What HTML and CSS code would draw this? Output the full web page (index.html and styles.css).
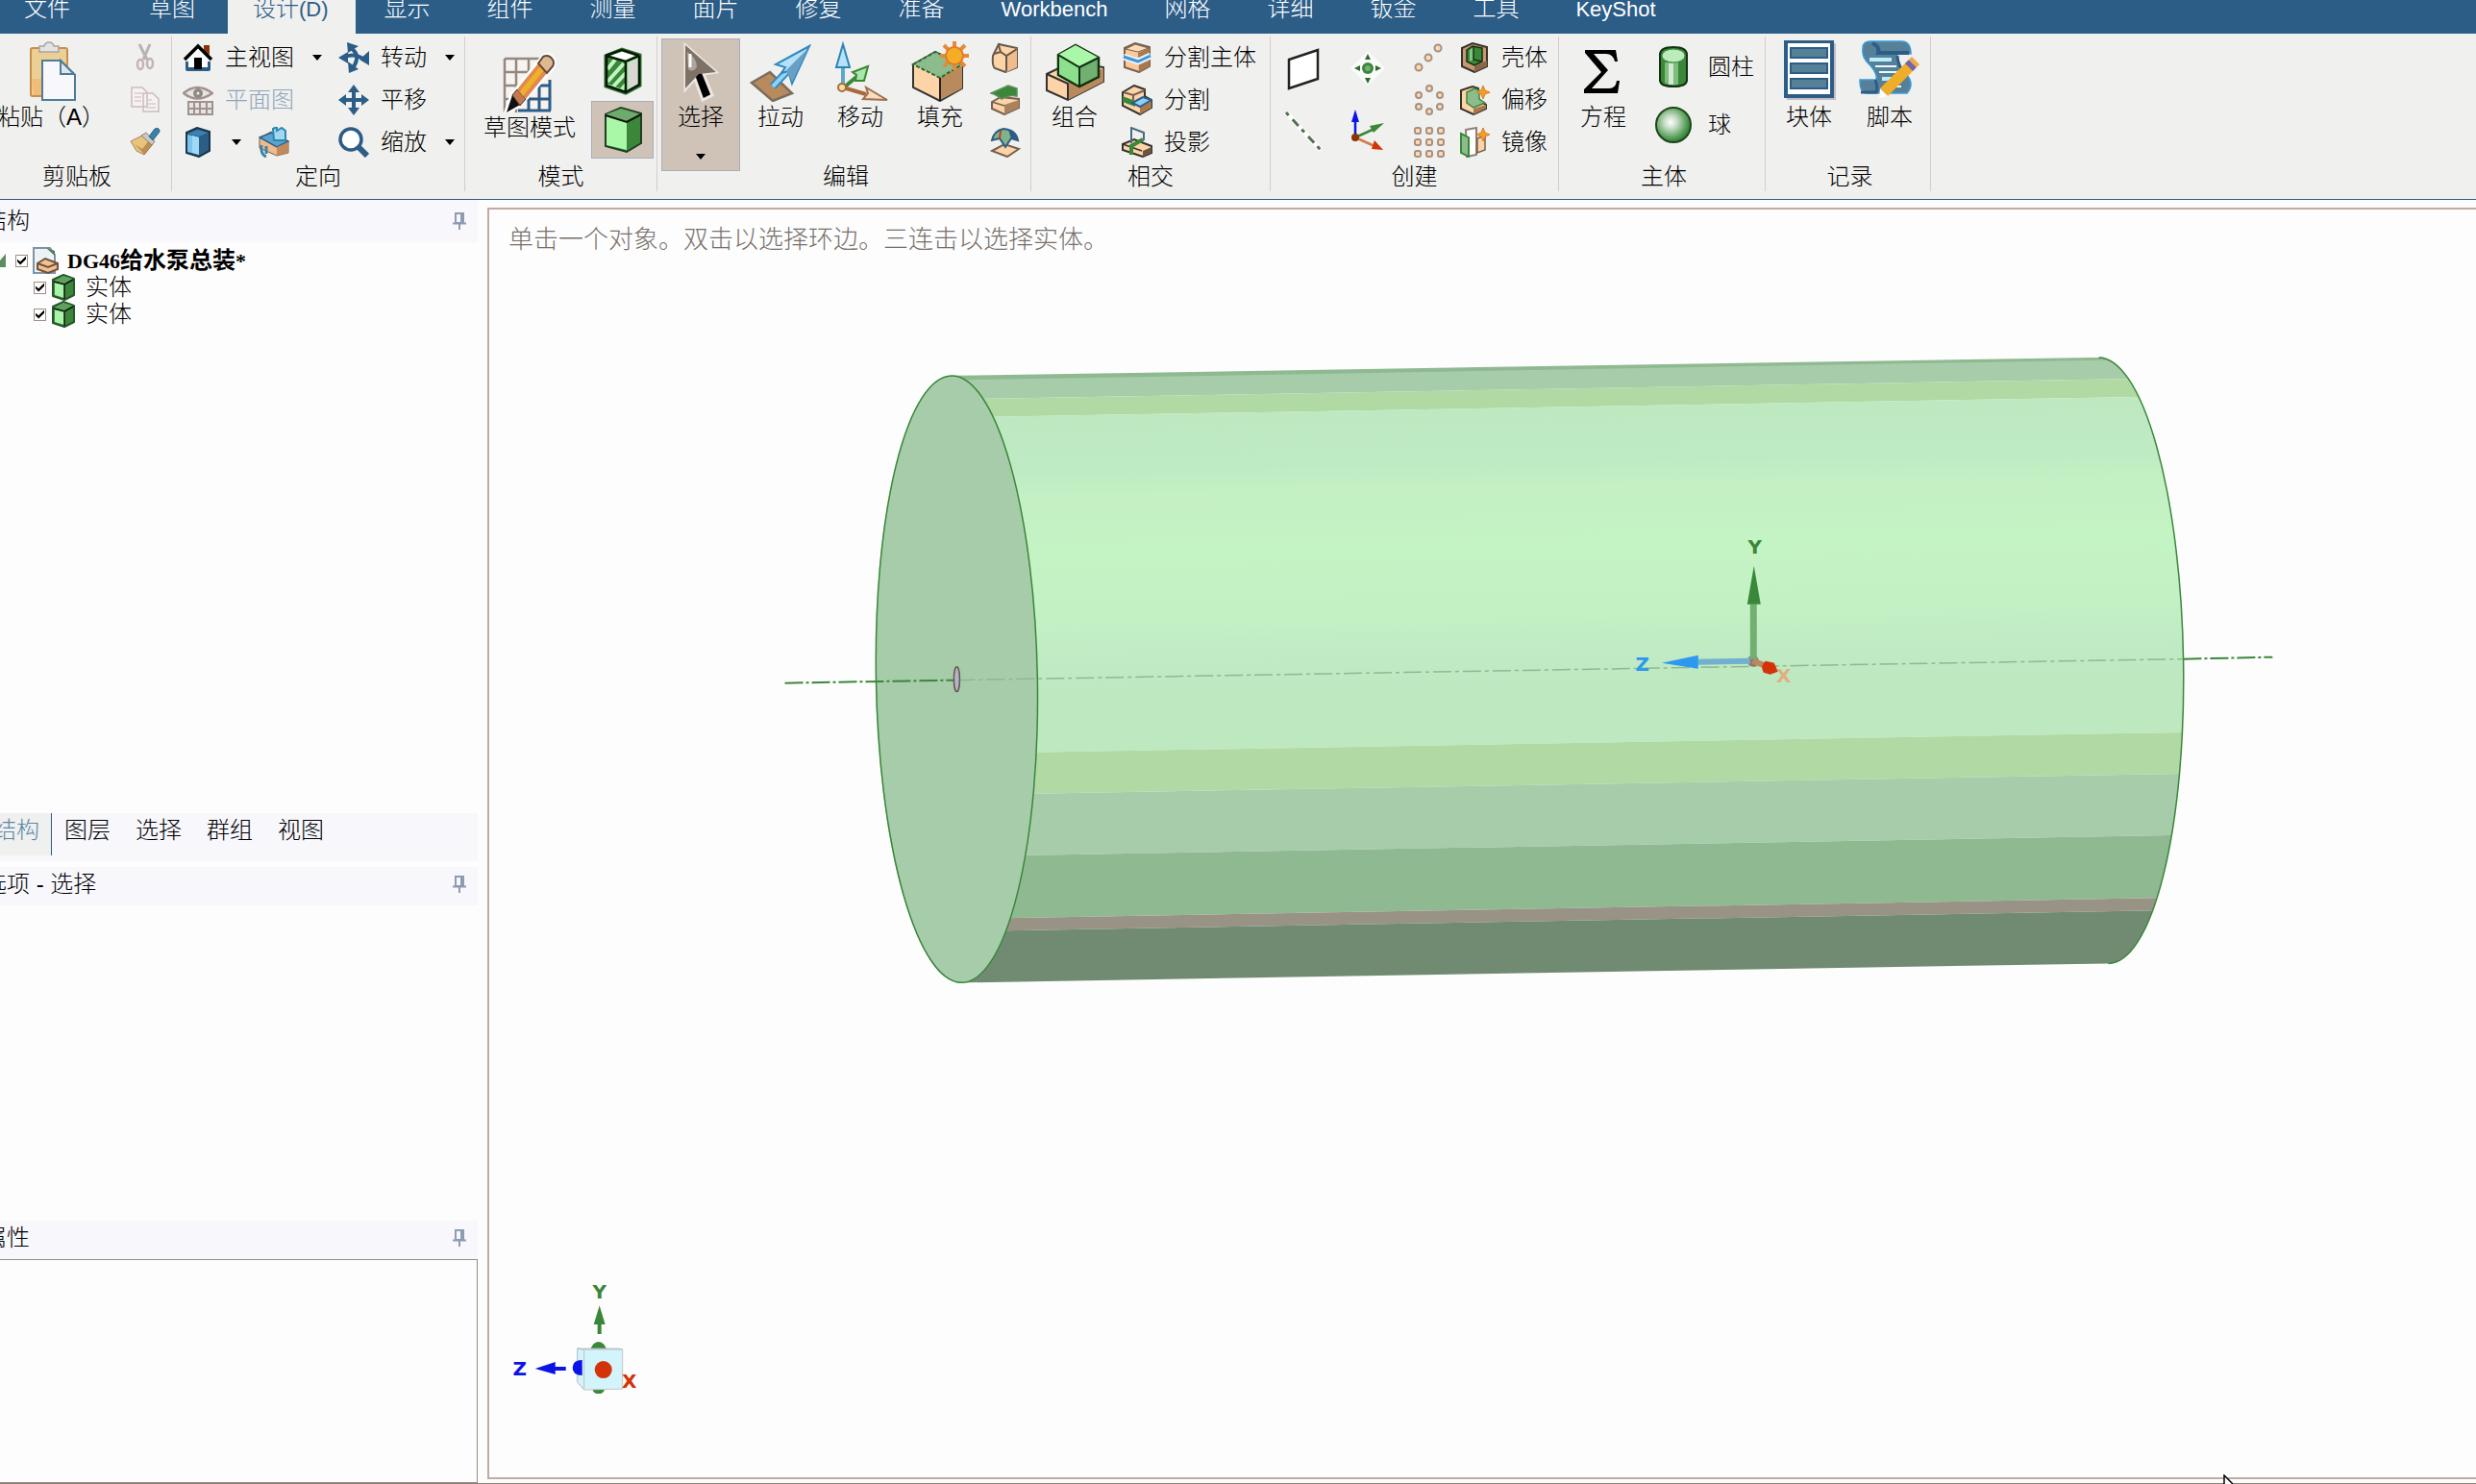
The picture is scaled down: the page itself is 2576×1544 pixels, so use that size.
FILE: index.html
```html
<!doctype html>
<html lang="zh-CN">
<head>
    <meta charset="UTF-8">
    <title>DG46给水泵总装</title>
    <link rel="stylesheet" href="styles.css">
</head>
<body>
<!-- shared icons -->
<svg class="defs" width="0" height="0">
    <symbol id="cube" viewBox="0 0 24 28">
        <path d="M1 6L12 1L23 5V22L13 27L1 23Z" fill="#3a873a" stroke="#2a552a" stroke-width="2" stroke-linejoin="round"/>
        <path d="M2 7L12 2L22 5L13 10Z" fill="#5da35d"/>
        <path d="M3 9L13 11V25L3 22Z" fill="#a8f4a8"/>
        <path d="M2 8L13 11L22 6M13 11V26" fill="none" stroke="#111" stroke-width="1.5"/>
    </symbol>
    <symbol id="pin" viewBox="0 0 14 18">
        <path d="M3 1H11V11H3ZM0 11.500H14M7 12V18M9 1V11" fill="none" stroke="#8f9bb0" stroke-width="2"/>
    </symbol>
</svg>

<nav id="tabs">
    <button class="file">文件</button>
    <button>草图</button>
    <button class="selected">设计<span>(D)</span></button>
    <button>显示</button>
    <button>组件</button>
    <button>测量</button>
    <button>面片</button>
    <button>修复</button>
    <button>准备</button>
    <button><span>Workbench</span></button>
    <button>网格</button>
    <button>详细</button>
    <button>钣金</button>
    <button>工具</button>
    <button><span>KeyShot</span></button>
</nav>

<div id="ribbon">
    <section class="group clipboard">
        <div class="tools">
            <button class="big">
                <svg width="64" height="64" viewBox="0 0 64 64">
                    <rect x="11" y="8" width="38" height="50" rx="2" fill="#eccf94" stroke="#c98e4c" stroke-width="2"/>
                    <path d="M12 40H30V57H14Z" fill="#f3b569" opacity=".7"/>
                    <path d="M20 12V6H25Q26 2 30 2T35 6H40V12Z" fill="#e4e2e2" stroke="#aaa2a2" stroke-width="1.500"/>
                    <path d="M23 21H42L57 36V62H23Z" fill="#f8f8fc" stroke="#4d7d98" stroke-width="2"/>
                    <path d="M42 21V35H56Z" fill="#dfe6ea" stroke="#4d7d98" stroke-width="2"/>
                </svg>
                <span>粘贴（A）</span>
            </button>
            <div class="col icons">
                <button aria-label="剪切" disabled><svg width="32" height="32" viewBox="0 0 32 32"><path d="M10 2L18 18M21 2L14 18" stroke="#b9b3b6" stroke-width="3"/><ellipse cx="11" cy="23" rx="3" ry="5" fill="none" stroke="#c5b3b3" stroke-width="2.500"/><ellipse cx="21" cy="22" rx="3" ry="5" fill="none" stroke="#c5b3b3" stroke-width="2.500"/></svg></button>
                <button aria-label="复制" disabled><svg width="32" height="32" viewBox="0 0 32 32"><path d="M2 3H13L18 8V23H2ZM14 9H24L30 15V28H14Z" fill="#f6f2f2" stroke="#cdbcbc" stroke-width="1.500"/><path d="M5 9H13M5 13H12M5 17H12M17 16H23M17 20H27M17 24H27" stroke="#d6cccc" stroke-width="1.500"/></svg></button>
                <button aria-label="格式刷"><svg width="32" height="32" viewBox="0 0 32 32"><path d="M1 15L15 8L24 18L15 29L7 25Z" fill="#e9c47e" stroke="#a98454"/><path d="M5 18L12 25L15 29L24 18L20 14L13 23Z" fill="#9b6a3a" opacity=".6"/><path d="M12 9L17 6L26 15L23 19Z" fill="#cfc6c0" stroke="#8d8078"/><path d="M20 10L26 2Q31 0 31 5L24 14Z" fill="#3b82a8" stroke="#2c5d87"/></svg></button>
            </div>
        </div>
        <h2>剪贴板</h2>
    </section>

    <section class="group orient">
        <div class="tools">
            <div class="col">
                <button class="row"><svg width="32" height="32" viewBox="0 0 32 32"><path d="M22 3H28V13L22 9Z" fill="#8a3305"/><path d="M3 20H29V28Q29 30 27 30H5Q3 30 3 28Z" fill="#2c5d87"/><path d="M6 17L16 6L26 17V26H6Z" fill="#fff"/><path d="M2 18L16 4L30 18" fill="none" stroke="#000" stroke-width="3.500"/><rect x="12" y="16" width="8" height="12" fill="#000"/></svg><span>主视图</span><i class="caret"></i></button>
                <button class="row" disabled><svg width="32" height="32" viewBox="0 0 32 32"><path d="M1 9Q15 -3 31 9Q15 20 1 9Z" fill="#e8e4e2" stroke="#a0938e" stroke-width="2.500"/><circle cx="16" cy="9" r="5" fill="#918884"/><circle cx="16" cy="9" r="1.500" fill="#eee"/><path d="M6 18H31V31H6ZM6 25H31M12 18V31M18 18V31M25 18V31" fill="#e8e4e2" stroke="#a0938e" stroke-width="2"/></svg><span>平面图</span></button>
                <div class="row">
                    <button class="row cubes" aria-label="视图方向"><svg width="32" height="32" viewBox="0 0 32 32"><path d="M4 6L15 1L28 5V25L17 31L4 27Z" fill="#2c5d87" stroke="#1c344c" stroke-width="2"/><path d="M5 8L17 11V29L5 26Z" fill="#7cc4ee"/><path d="M10 9L17 11V29L10 27Z" fill="#a0d8f8"/><path d="M5 7L16 3L26 6L17 10Z" fill="#3b82b0"/></svg><i class="caret"></i></button>
                    <button aria-label="对齐视图"><svg width="32" height="32" viewBox="0 0 32 32"><path d="M1 12L13 5L31 15V27L19 30L1 22Z" fill="#f0bb8a" stroke="#77604e"/><path d="M1 11L13 6L31 15L19 21Z" fill="#58a4cc" stroke="#2c5d87" stroke-width="1.500"/><path d="M19 21L31 16V27L19 30Z" fill="#c08a5c"/><path d="M3 19Q2 29 8 31M8 20V28" fill="none" stroke="#3b82a8" stroke-width="3"/><path d="M15 2L19 0V4L24 1L28 4V14H16Z" fill="#a0d8f0" stroke="#2d86b4" stroke-width="2"/></svg></button>
                </div>
            </div>
            <div class="col">
                <button class="row"><svg width="32" height="32" viewBox="0 0 32 32"><path d="M11 5Q25 12 15 27" fill="none" stroke="#2c5d87" stroke-width="4"/><path d="M5 16Q16 10 27 18" fill="none" stroke="#2c5d87" stroke-width="4"/><path d="M9 0L21 4L10 11ZM0 16L10 10V22ZM32 9V24L22 18ZM10 20L21 28L11 32Z" fill="#2c5d87"/></svg><span>转动</span><i class="caret"></i></button>
                <button class="row"><svg width="32" height="32" viewBox="0 0 32 32"><path d="M16 4V28M4 16H28" stroke="#2c5d87" stroke-width="4"/><path d="M16 0L22 8H10ZM16 32L22 24H10ZM0 16L8 10V22ZM32 16L24 10V22Z" fill="#2c5d87"/></svg><span>平移</span></button>
                <button class="row"><svg width="32" height="32" viewBox="0 0 32 32"><path d="M20 20L30 30" stroke="#2c5d87" stroke-width="6"/><circle cx="13" cy="13" r="11" fill="#fff" stroke="#2c5d87" stroke-width="3.500"/></svg><span>缩放</span><i class="caret"></i></button>
            </div>
        </div>
        <h2>定向</h2>
    </section>

    <section class="group mode">
        <div class="tools">
            <button class="big low">
                <svg width="64" height="64" viewBox="0 0 64 64">
                    <path d="M6 8H52V64H6Z" fill="#f6f3f1"/>
                    <path d="M6 8H52M6 22H52M6 36H40M6 50H30M6 8V64M18 8V64M31 8V36M43 8V24" stroke="#958780" stroke-width="2.500" fill="none"/>
                    <path d="M30 36H53M26 50H53M20 62H54M31 44V62M42 34V62M53 30V62" stroke="#2c5d87" stroke-width="3" fill="none"/>
                    <path d="M8 63L14 46L46 6Q52 2 56 8Q58 12 56 17L22 56Z" fill="#f0e0d0" stroke="#fff" stroke-width="5"/>
                    <path d="M8 64L14 46L22 56Z" fill="#111"/>
                    <path d="M14 46L19 40L28 50L22 57Z" fill="#c4784b" stroke="#333"/>
                    <path d="M19 40L41 13L50 23L28 50Z" fill="#e08850"/>
                    <path d="M22 42L43 16L47 20L25 47Z" fill="#f0b028"/>
                    <path d="M41 13L46 6Q52 3 56 9Q58 12 56 16L50 23Z" fill="#e0b890" stroke="#604a3c" stroke-width="2"/>
                </svg>
                <span>草图模式</span>
            </button>
            <div class="toggles">
                <button aria-label="剖面模式"><svg width="42" height="50" viewBox="0 0 42 50"><path d="M3 9L20 2L39 8V40L24 48L3 41Z" fill="#a8f4a8" stroke="#2c6b2c" stroke-width="3"/><path d="M9 9L20 5L34 9L23 14Z" fill="#fff"/><path d="M27 17L36 12V39L27 43Z" fill="#ddd6d4"/><path d="M5 11L24 16V45L5 38Z" fill="#3a873a"/><path d="M5 23L13 13M5 36L22 17M11 41L24 27M20 44L24 39" stroke="#c2f5c2" stroke-width="4"/><path d="M3 9L24 15L38 9M24 15V47M4 10V40L24 47L38 39V9M3 9L20 3L38 9" fill="none" stroke="#071807" stroke-width="2.500"/></svg></button>
                <button class="selected" aria-label="三维模式"><svg width="42" height="50" viewBox="0 0 42 50"><path d="M3 9L19 2L40 8V39L25 48L3 42Z" fill="#3a873a" stroke="#233c23" stroke-width="2"/><path d="M3 9L19 3L40 9L25 16Z" fill="#6cab6c"/><path d="M4 11L25 17V46L4 41Z" fill="#a8f8a8"/><path d="M3 10L25 17L40 9" fill="none" stroke="#111" stroke-width="2"/></svg></button>
            </div>
        </div>
        <h2>模式</h2>
    </section>

    <section class="group edit">
        <div class="tools">
            <button class="big selected">
                <svg width="64" height="64" viewBox="0 0 64 64"><path d="M16 5L48 33L35 35L44 57L34 62L26 40L16 51Z" fill="#000" stroke="#eee8e4" stroke-width="3"/><path d="M16 5L48 33L30 35L16 50Z" fill="#7d7265"/><path d="M18 12Q28 18 28 28Q24 34 19 30Z" fill="#aea69c"/><path d="M21 14V28" stroke="#fff" stroke-width="3"/></svg>
                <span>选择</span>
                <i class="caret"></i>
            </button>
            <button class="big">
                <svg width="64" height="64" viewBox="0 0 64 64"><path d="M2 44L21 33L44 55L24 63Z" fill="#b98a5c" stroke="#7c6c60" stroke-width="2.500"/><path d="M24 48L40 31" stroke="#3289c0" stroke-width="8"/><path d="M24 48L42 29" stroke="#8fd2f4" stroke-width="4"/><path d="M62 6L27 25L37 28L33 34L40 32L44 45Z" fill="#b5e2f8" stroke="#3289c0" stroke-width="2"/><path d="M61 8L38 31L44 43Z" fill="#6a9fc4"/></svg>
                <span>拉动</span>
            </button>
            <button class="big">
                <svg width="64" height="64" viewBox="0 0 64 64"><path d="M14 50V26" stroke="#5fa8cc" stroke-width="4"/><path d="M14 4L21 28H7Z" fill="#b5e2f8" stroke="#2c85b4" stroke-width="2"/><path d="M15 49L28 38" stroke="#3a873a" stroke-width="4"/><path d="M40 27L24 33L28 36L27 42L36 42Z" fill="#a8e8a8" stroke="#3a873a" stroke-width="2"/><path d="M14 49L38 56" stroke="#a8683c" stroke-width="4"/><path d="M60 62L38 49L40 55L35 61Z" fill="#fcdcc0" stroke="#a07050" stroke-width="2"/><circle cx="13" cy="49" r="4" fill="#fcdca0" stroke="#a07040" stroke-width="2"/></svg>
                <span>移动</span>
            </button>
            <button class="big">
                <svg width="64" height="64" viewBox="0 0 64 64"><path d="M4 25L27 12L55 25V50L32 63L4 49Z" fill="#fcd4a8" stroke="#333" stroke-width="2"/><path d="M32 38L55 26V50L32 62Z" fill="#b98a5c"/><path d="M4 25L27 12L55 25L32 39Z" fill="#8cbb8c" stroke="#2c6b2c" stroke-width="2" stroke-dasharray="4 2"/><path d="M32 39V63" stroke="#222" stroke-width="2"/><path d="M47 1V31M32 16H62M36 5L58 27M58 5L36 27" stroke="#e68a3a" stroke-width="4"/><circle cx="47" cy="16" r="9" fill="#f3ae25" stroke="#e07c28" stroke-width="2"/></svg>
                <span>填充</span>
            </button>
            <div class="col icons">
                <button aria-label="移除"><svg width="32" height="32" viewBox="0 0 32 32"><path d="M3 14L9 2L28 6V26L16 31L5 27Q2 24 3 14Z" fill="#fcd4a8" stroke="#66574c" stroke-width="2"/><path d="M17 13L28 6V26L17 31Z" fill="#f0bc8c"/><path d="M4 12L11 10L17 14L28 7M17 14V30M11 10L9 3" fill="none" stroke="#66574c" stroke-width="2"/></svg></button>
                <button aria-label="替换"><svg width="32" height="32" viewBox="0 0 32 32"><path d="M2 18L11 13L30 15V24L15 31L2 25Z" fill="#fcd4a8" stroke="#77604e" stroke-width="2"/><path d="M15 21L30 16V24L15 31Z" fill="#a9835f"/><path d="M2 18L15 22" stroke="#77604e" stroke-width="1.500"/><path d="M1 9L10 5Q15 3 19 1L28 4V12Q20 10 12 15Q6 10 1 9Z" fill="#3a873a" stroke="#5c8c5c" stroke-width="1.500"/></svg></button>
                <button aria-label="曲面"><svg width="32" height="32" viewBox="0 0 32 32"><path d="M2 25L15 18L30 23L18 31Z" fill="#fcd4a8" stroke="#77604e" stroke-width="2"/><path d="M2 14Q4 4 14 2Q27 3 29 14L22 12L16 21L10 12Z" fill="#80b28c" stroke="#2c5d87" stroke-width="2"/><path d="M19 3Q28 6 29 14L22 12Z" fill="#2c5d87"/><path d="M11 4L10 12" fill="none" stroke="#d04010" stroke-width="2"/></svg></button>
            </div>
        </div>
        <h2>编辑</h2>
    </section>

    <section class="group intersect">
        <div class="tools">
            <button class="big">
                <svg width="64" height="64" viewBox="0 0 64 64"><path d="M3 35L30 22L62 28V43L25 62L3 52Z" fill="#fcd4a8" stroke="#333" stroke-width="2"/><path d="M25 44L62 29V43L25 62Z" fill="#b98a5c"/><path d="M3 35L25 45V62" fill="none" stroke="#333" stroke-width="2"/><path d="M15 15L33 5L57 18V38L37 48L15 36Z" fill="#72b072" stroke="#123012" stroke-width="2.500"/><path d="M15 15L33 5L57 18L38 28Z" fill="#a8f8a8"/><path d="M16 17L37 28V47L16 35Z" fill="#8ce08c"/><path d="M15 15L37 28L57 18M37 28V48" fill="none" stroke="#123012" stroke-width="2"/></svg>
                <span>组合</span>
            </button>
            <div class="col">
                <button class="row"><svg width="32" height="32" viewBox="0 0 32 32"><path d="M3 6L14 1L29 5V25L18 31L3 26Z" fill="#fcc898" stroke="#77604e" stroke-width="2"/><path d="M17 11L29 6V25L18 31Z" fill="#a9784c"/><path d="M4 7L14 2L28 6L17 10Z" fill="#fcdcb8" stroke="#77604e"/><path d="M2 15L17 20L30 14" fill="none" stroke="#e8f2f8" stroke-width="7"/><path d="M2 15L17 20L30 14" fill="none" stroke="#3a96dc" stroke-width="3"/></svg><span>分割主体</span></button>
                <button class="row"><svg width="32" height="32" viewBox="0 0 32 32"><path d="M1 8L13 1L24 5V12L31 16V24L19 31L1 22Z" fill="#fcd4a8" stroke="#333" stroke-width="2"/><path d="M19 24L31 17V24L19 31Z" fill="#a9784c"/><path d="M1 12L14 17V23L1 18Z" fill="#3a873a"/><path d="M11 19L22 13L31 16L19 23Z" fill="#90d0f8" stroke="#2c5d87" stroke-width="2"/><path d="M2 8L12 11L24 6M12 11V16" fill="none" stroke="#77604e" stroke-width="2"/></svg><span>分割</span></button>
                <button class="row"><svg width="32" height="32" viewBox="0 0 32 32"><path d="M1 18L13 13L31 20V27L22 31L1 24Z" fill="#fcd4a8" stroke="#333" stroke-width="2"/><path d="M22 25L31 21V27L22 31Z" fill="#6d543f"/><path d="M1 18L21 25" stroke="#333" stroke-width="1.500"/><path d="M10 17V1L23 6V14" fill="none" stroke="#4a6a84" stroke-width="2"/><path d="M10 29V20L22 13" fill="none" stroke="#3a873a" stroke-width="4"/></svg><span>投影</span></button>
            </div>
        </div>
        <h2>相交</h2>
    </section>

    <section class="group create">
        <div class="tools">
            <div class="cell">
                <button aria-label="平面"><svg width="42" height="44" viewBox="0 0 42 44"><path d="M6 12L36 2V32L6 42Z" fill="#fff" stroke="#222" stroke-width="2.500"/></svg></button>
                <button aria-label="轴"><svg width="42" height="44" viewBox="0 0 42 44"><path d="M3 3L39 42" stroke="#fff" stroke-width="5"/><path d="M3 3L39 42" stroke="#55704f" stroke-width="3" stroke-dasharray="4 6 9 5"/></svg></button>
            </div>
            <div class="cell">
                <button aria-label="点"><svg width="42" height="44" viewBox="0 0 42 44"><path d="M21 3L39 21L21 39L3 21Z" fill="#fbfbfb"/><circle cx="21" cy="21" r="6" fill="#3a873a"/><circle cx="21" cy="21" r="3" fill="#72b072"/><path d="M21 6L24 12H18ZM21 37L24 31H18ZM7 21L13 18V24ZM35 21L29 18V24Z" fill="#2c6b2c"/></svg></button>
                <button aria-label="坐标系"><svg width="42" height="44" viewBox="0 0 42 44"><path d="M8 29V10" stroke="#0a14e6" stroke-width="2.500"/><path d="M8 0L12 13H4Z" fill="#0a14e6"/><path d="M8 29L28 20" stroke="#3a873a" stroke-width="2.500"/><path d="M38 14L23 17L27 24Z" fill="#3a873a"/><path d="M8 29L28 38" stroke="#d47a4a" stroke-width="2.500"/><path d="M37 42L28 32L25 41Z" fill="#d43208"/><circle cx="8" cy="29" r="4" fill="#8a3305"/></svg></button>
            </div>
            <div class="col icons">
                <button aria-label="线性阵列"><svg width="32" height="32" viewBox="0 0 32 32" fill="#fcdcb0" stroke="#a88f84" stroke-width="2"><circle cx="5" cy="26" r="3.500"/><circle cx="15" cy="16" r="3.500"/><circle cx="25" cy="6" r="3.500"/></svg></button>
                <button aria-label="圆形阵列"><svg width="32" height="32" viewBox="0 0 32 32" fill="#fcdcb0" stroke="#a88f84" stroke-width="2"><circle cx="16" cy="4" r="3"/><circle cx="5" cy="11" r="3"/><circle cx="27" cy="11" r="3"/><circle cx="5" cy="23" r="3"/><circle cx="27" cy="23" r="3"/><circle cx="16" cy="28" r="3"/></svg></button>
                <button aria-label="填充阵列"><svg width="32" height="32" viewBox="0 0 32 32" fill="#fcdcb0" stroke="#a88f84" stroke-width="2"><rect x="1" y="1" width="6" height="6" rx="2"/><rect x="13" y="1" width="6" height="6" rx="2"/><rect x="25" y="1" width="6" height="6" rx="2"/><rect x="1" y="13" width="6" height="6" rx="2"/><rect x="13" y="13" width="6" height="6" rx="2"/><rect x="25" y="13" width="6" height="6" rx="2"/><rect x="1" y="25" width="6" height="6" rx="2"/><rect x="13" y="25" width="6" height="6" rx="2"/><rect x="25" y="25" width="6" height="6" rx="2"/></svg></button>
            </div>
            <div class="col">
                <button class="row"><svg width="32" height="32" viewBox="0 0 32 32"><path d="M3 6L14 1L29 5V25L16 31L3 25Z" fill="#c49a72" stroke="#3c3028" stroke-width="2"/><path d="M16 25L29 19V25L16 31Z" fill="#8a6648"/><path d="M8 8L14 4L24 6V20L16 24L8 20Z" fill="#3a873a" stroke="#143014" stroke-width="1.500"/><path d="M11 8V20L15 18V5Z" fill="#80c880"/><path d="M15 5V18L24 20" fill="none" stroke="#143014" stroke-width="1.500"/></svg><span>壳体</span></button>
                <button class="row"><svg width="32" height="32" viewBox="0 0 32 32"><path d="M2 6L14 2L20 4V16L28 21V25L15 31L2 25Z" fill="#fcd4a8" stroke="#3c3028" stroke-width="2"/><path d="M8 8L16 4L21 6V15L27 19L15 24L8 19Z" fill="#8cbb8c" stroke="#3a873a" stroke-width="1.500"/><path d="M15 25L28 21V25L15 31Z" fill="#a9784c"/><path d="M25 1L27 6L32 8L27 10L25 15L23 10L18 8L23 6Z" fill="#f0a028" stroke="#e07c28"/></svg><span>偏移</span></button>
                <button class="row"><svg width="32" height="32" viewBox="0 0 32 32"><path d="M7 3L18 1V29L8 31Z" fill="#fff" stroke="#8d8078" stroke-width="2"/><path d="M19 12L27 9V24L19 27Z" fill="#fcd4a8" stroke="#77604e" stroke-width="1.500"/><path d="M2 7L10 11V31L2 27Z" fill="#8cbb8c" stroke="#3a873a" stroke-width="2"/><path d="M25 1L27 6L32 8L27 10L25 15L23 10L18 8L23 6Z" fill="#f0a028" stroke="#e07c28"/></svg><span>镜像</span></button>
            </div>
        </div>
        <h2>创建</h2>
    </section>

    <section class="group solid">
        <div class="tools">
            <button class="big">
                <svg width="64" height="64" viewBox="0 0 64 64"><path d="M13 10H45L47 22H44Q42 14 35 14H22L37 31L20 50H38Q45 50 46 42H49L47 55H12V51L30 33L13 13Z" fill="#000"/></svg>
                <span>方程</span>
            </button>
            <div class="pair">
                <button><svg width="42" height="44" viewBox="0 0 42 44"><path d="M7 8Q8 1 21 1T35 8V36Q34 42 21 42T7 36Z" fill="#3a873a" stroke="#123012" stroke-width="2"/><path d="M12 17H26V40Q16 41 12 38Z" fill="#7cbc7c"/><path d="M16 18H21V40H16Z" fill="#d4e8d4"/><ellipse cx="21" cy="10" rx="12" ry="7" fill="#bcecbc" stroke="#3a873a"/></svg><span>圆柱</span></button>
                <button><svg width="42" height="44" viewBox="0 0 42 44"><defs><radialGradient id="ball" cx=".42" cy=".42" r=".55"><stop offset="0" stop-color="#fff"/><stop offset=".35" stop-color="#c4dcc4"/><stop offset=".75" stop-color="#6aa86a"/><stop offset="1" stop-color="#3a873a"/></radialGradient></defs><circle cx="21" cy="22" r="18" fill="url(#ball)" stroke="#1c451c" stroke-width="2"/></svg><span>球</span></button>
            </div>
        </div>
        <h2>主体</h2>
    </section>

    <section class="group record">
        <div class="tools">
            <button class="big">
                <svg width="64" height="64" viewBox="0 0 64 64"><path d="M9 3H60V62H9Z" fill="#c5bdc4"/><rect x="8" y="1" width="48" height="57" fill="#fff" stroke="#2c5d87" stroke-width="4"/><path d="M13 8H51V18H13ZM13 24H51V34H13ZM13 40H51V50H13Z" fill="#568098" stroke="#2c5d87" stroke-width="2"/></svg>
                <span>块体</span>
            </button>
            <button class="big">
                <svg width="64" height="64" viewBox="0 0 64 64"><path d="M4 8Q4 1 12 1H44Q54 1 54 14H40Q38 24 50 36Q58 46 50 55H8Q1 55 1 41H18Q20 34 8 22Q3 16 4 8Z" fill="#568098" stroke="#3a9ad8" stroke-width="1.500"/><path d="M14 3Q22 6 20 13H52" fill="none" stroke="#2c5d87" stroke-width="4"/><path d="M17 41Q20 50 18 54H2M40 16Q40 26 50 38" fill="none" stroke="#2c5d87" stroke-width="3"/><path d="M11 20H34M24 40H40" stroke="#b8eefa" stroke-width="4"/><path d="M17 27H39M21 33H40M30 48H44" stroke="#e8fafe" stroke-width="2"/><path d="M22 50L50 22L58 30L30 58Z" fill="#f0ae28"/><path d="M48 24L52 20L60 28L56 32Z" fill="#7464a8"/><path d="M52 20L55 17L63 25L60 28Z" fill="#f0a840"/><path d="M22 50L30 58L21 60Z" fill="#fff"/></svg>
                <span>脚本</span>
            </button>
        </div>
        <h2>记录</h2>
    </section>
</div>

<main id="workspace">
    <aside id="sidebar">
        <header class="first">结构<button aria-label="固定"><svg width="14" height="18"><use href="#pin"/></svg></button></header>
        <ul id="tree">
            <li class="root">
                <i class="arrow"></i>
                <input type="checkbox" id="n0" checked>
                <svg width="28" height="28" viewBox="0 0 28 28"><path d="M2 1H19L24 8V27H2Z" fill="#eef2f6" stroke="#7f94a8" stroke-width="2"/><path d="M15 1L24 9V4Z" fill="#4d7d58"/><path d="M6 17L14 12L27 17V23L17 27L6 23Z" fill="#f4c090" stroke="#6d5440" stroke-width="2"/><path d="M6 17L17 21L27 17" fill="none" stroke="#6d5440" stroke-width="2"/></svg>
                <label for="n0"><span>DG46</span>给水泵总装<span>*</span></label>
            </li>
            <li>
                <input type="checkbox" id="n1" checked>
                <svg width="24" height="28"><use href="#cube"/></svg>
                <label for="n1">实体</label>
            </li>
            <li>
                <input type="checkbox" id="n2" checked>
                <svg width="24" height="28"><use href="#cube"/></svg>
                <label for="n2">实体</label>
            </li>
        </ul>
        <div id="views">
            <button class="selected">结构</button>
            <button>图层</button>
            <button>选择</button>
            <button>群组</button>
            <button>视图</button>
        </div>
        <header>选项 - 选择<button aria-label="固定"><svg width="14" height="18"><use href="#pin"/></svg></button></header>
        <div id="options"></div>
        <header>属性<button aria-label="固定"><svg width="14" height="18"><use href="#pin"/></svg></button></header>
        <div id="props"></div>
    </aside>

    <div id="viewport">
        <svg id="scene" viewBox="510 217 2067 1320">
            <defs>
                <linearGradient id="light" x1="0" y1="0" x2="0" y2="1">
                    <stop offset="0" stop-color="#bde8c0"/>
                    <stop offset=".16" stop-color="#bfebc4"/>
                    <stop offset=".24" stop-color="#c4f0c4"/>
                    <stop offset=".4" stop-color="#c4f3c4"/>
                    <stop offset=".6" stop-color="#c4f1c4"/>
                    <stop offset=".72" stop-color="#c0ebc4"/>
                    <stop offset=".82" stop-color="#bde8c0"/>
                    <stop offset="1" stop-color="#bde8c0"/>
                </linearGradient>
                <clipPath id="hull">
                    <path d="M990 390L2185 371A83 315 -1 0 1 2195 1002L1001 1022A84 315 -1 0 1 990 390Z"/>
                </clipPath>
            </defs>
            <!-- body -->
            <g clip-path="url(#hull)">
                <g transform="skewY(-1)">
                    <rect x="900" y="400" width="1400" height="13" fill="#8fb991"/>
                    <rect x="900" y="412" width="1400" height="20" fill="#a7ccaa"/>
                    <rect x="900" y="432" width="1400" height="19" fill="#b0d9a3"/>
                    <rect x="900" y="451" width="1400" height="350" fill="url(#light)"/>
                    <rect x="900" y="801" width="1400" height="43" fill="#b0d9a3"/>
                    <rect x="900" y="844" width="1400" height="64" fill="#a7ccaa"/>
                    <rect x="900" y="908" width="1400" height="65" fill="#8fb991"/>
                    <rect x="900" y="973" width="1400" height="13" fill="#989384"/>
                    <rect x="900" y="986" width="1400" height="60" fill="#718b72"/>
                </g>
            </g>
            <path d="M2185 371A83 315 -1 0 1 2195 1002" fill="none" stroke="#3a873a" stroke-width="1.500"/>
            <ellipse cx="996" cy="706" rx="84" ry="316" transform="rotate(-1 996 706)" fill="#a7ccaa" stroke="#3a873a" stroke-width="1.500"/>
            <!-- axis -->
            <path d="M817 710L996 707M2273 685L2366 683" stroke="#3a873a" stroke-width="2" stroke-dasharray="19 3 3 3"/>
            <path d="M996 707L2272 685" stroke="#8fb991" stroke-width="1.500" stroke-dasharray="19 4 4 4"/>
            <ellipse cx="996" cy="706" rx="3" ry="13" fill="#b4b4c8" stroke="#65584f" stroke-width="1.500"/>
            <!-- origin -->
            <circle cx="1825" cy="687" r="6" fill="#8d7b70"/>
            <path d="M1822 628H1829V685H1822Z" fill="#72b072"/>
            <path d="M1826 588L1833 628H1819Z" fill="#3a873a"/>
            <path d="M1768 685L1822 684V690L1768 691Z" fill="#72b0cf"/>
            <path d="M1730 689L1768 681V695Z" fill="#2c98f0"/>
            <path d="M1825 687L1840 693" stroke="#b98a5c" stroke-width="6"/>
            <path d="M1838 687L1847 689L1851 698L1843 701L1836 699Q1832 692 1838 687Z" fill="#d43208"/>
            <text x="1827" y="575" fill="#3a873a">Y</text>
            <text x="1710" y="697" fill="#2c98f0">Z</text>
            <text x="1857" y="709" fill="#dfb084">X</text>
            <!-- orientation cube -->
            <ellipse cx="623" cy="1405" rx="8" ry="9" fill="#3a873a"/>
            <ellipse cx="623" cy="1446" rx="6" ry="4" fill="#3a873a"/>
            <path d="M601 1403L608 1404V1446L601 1438Z" fill="#d2f4fa" stroke="#b0bcc4"/>
            <path d="M601 1403L608 1404H648L644 1403Z" fill="#d2f4fa" stroke="#b0bcc4"/>
            <path d="M606 1415V1431Q596 1431 596 1423T606 1415Z" fill="#0a14e6"/>
            <path d="M608 1404H648V1445L608 1446Z" fill="#d2f4fa" stroke="#c4c4cc"/>
            <ellipse cx="628" cy="1425" rx="9" ry="9" fill="#d43208"/>
            <path d="M624 1358L630 1378H626V1388H622V1378H618Z" fill="#3a873a"/>
            <path d="M557 1424L578 1417V1422H589V1426H578V1430Z" fill="#0a14e6"/>
            <text x="624" y="1351" fill="#3a873a">Y</text>
            <text x="541" y="1431" fill="#0a14e6">Z</text>
            <text x="655" y="1444" fill="#d43208">X</text>
        </svg>
        <p>单击一个对象。双击以选择环边。三连击以选择实体。</p>
    </div>
</main>
<svg id="pointer" width="10" height="10" viewBox="0 0 10 10"><path d="M1 10V1L10 10" fill="#fff" stroke="#000" stroke-width="1.500"/></svg>
</body>
</html>
```

FILE: styles.css
```css
*{
    padding: 0;
    margin: 0;
    box-sizing: border-box;
}
body{
    height: 100vh;
    display: flex;
    flex-direction: column;
    overflow: hidden;
    position: relative;
    background: #fdfdfd;
    color: #000;
    font: 300 24px/32px "Liberation Sans", "Noto Sans CJK SC", sans-serif;
}
svg{
    display: block;
    flex: none;
}
.defs{
    position: absolute;
}
button{
    border: 0;
    background: none;
    font: inherit;
    color: inherit;
    white-space: nowrap;
}
li{
    list-style: none;
}

/* tabs */
#tabs{
    height: 35px;
    display: flex;
    gap: 1px;
    align-items: flex-end;
    overflow: hidden;
    background: #2c5d87;
    color: #fff;
}
#tabs button{
    flex: none;
    height: 52px;
    padding: 0 29px;
}
#tabs span{
    font-size: 22px;
}
#tabs .file{
    padding: 0 52px 0 25px;
}
#tabs .selected{
    margin-left: 4px;
    padding: 0 28px 0 26px;
    background: #f0f0ee;
    color: #2c5d87;
}

/* ribbon */
#ribbon{
    display: flex;
    padding: 3px 0 8px;
    background: #f0f0ee;
    border-bottom: 1px solid #2c5d87;
}
.group{
    flex: none;
    padding-bottom: 2px;
    border-right: 1px solid #d8ccca;
}
.group h2{
    font-size: 24px;
    font-weight: 300;
    line-height: 27px;
    text-align: center;
}
.tools{
    height: 132px;
    display: flex;
    align-items: flex-start;
}
.big{
    width: 82px;
    flex: none;
    padding-top: 4px;
    display: flex;
    flex-direction: column;
    align-items: center;
}
.col button, .col .row{
    height: 44px;
    display: flex;
    align-items: center;
}
.row{
    gap: 12px;
}
.icons{
    width: 54px;
}
.icons button{
    width: 100%;
    justify-content: center;
}
.caret{
    width: 10px;
    height: 6px;
    background: #000;
    clip-path: polygon(0 0, 100% 0, 50% 100%);
}
.row .caret{
    margin-left: 7px;
}
button:disabled span{
    color: #8fa4bb;
}
#ribbon .selected{
    background: #cfc3b8;
    border: 1px solid #a9aeba;
}
.clipboard{
    width: 197px;
    margin-left: -18px;
}
.clipboard .big{
    width: 142px;
}
.orient{
    width: 305px;
}
.orient .col{
    width: 162px;
    margin-left: 11px;
}
.orient .col + .col{
    margin-left: 0;
    width: 120px;
}
.orient .cubes{
    margin-right: 6px;
}
.mode{
    width: 200px;
}
.mode .low{
    width: 131px;
    padding: 15px 0 0 3px;
}
.toggles{
    padding-top: 6px;
    display: grid;
    gap: 1px;
}
.toggles button{
    width: 65px;
    height: 60px;
    display: flex;
    align-items: center;
    justify-content: center;
}
.edit{
    width: 389px;
    padding-left: 4px;
}
.edit .tools{
    gap: 1px;
}
.edit .selected{
    height: 138px;
    margin-top: 2px;
    padding-top: 1px;
}
.edit .caret{
    margin-top: 22px;
}
.intersect{
    width: 249px;
}
.intersect .big{
    width: 94px;
    padding-right: 4px;
}
.create{
    width: 300px;
}
.cell{
    width: 67px;
    padding-top: 2px;
}
.cell button{
    width: 100%;
    height: 64px;
    display: flex;
    align-items: center;
    justify-content: center;
}
.create .icons{
    width: 62px;
}
.solid{
    width: 215px;
    padding-left: 4px;
}
.solid .big{
    width: 84px;
}
.pair{
    padding: 2px 0 0 10px;
}
.pair button{
    height: 60px;
    display: flex;
    align-items: center;
    gap: 15px;
}
.record{
    width: 172px;
    padding-left: 4px;
}
.record .tools{
    gap: 2px;
}

/* left side */
#workspace{
    flex: 1;
    min-height: 0;
    display: flex;
    border-bottom: 1px solid #8a8078;
}
#sidebar{
    width: 515px;
    flex: none;
    margin-left: -18px;
    display: flex;
    flex-direction: column;
}
#sidebar header{
    height: 40px;
    flex: none;
    padding: 0 12px 4px 1px;
    display: flex;
    align-items: center;
    justify-content: space-between;
    background: #f7f7fc;
}
#sidebar .first{
    height: 44px;
    padding-bottom: 0;
}
#tree{
    flex: 592 0 0;
    min-height: 0;
    padding: 5px 0 0 18px;
}
#tree li{
    height: 28px;
    padding-left: 35px;
    display: flex;
    align-items: center;
    gap: 6px;
}
#tree .root{
    padding-left: 0;
    gap: 4px;
}
#tree label{
    padding-left: 5px;
}
#tree .root label{
    font-weight: 700;
}
#tree .root span{
    font-family: "Liberation Serif", serif;
    font-size: 22px;
}
.arrow{
    width: 6px;
    height: 14px;
    margin-right: 6px;
    background: #5d8c5d;
    clip-path: polygon(100% 0, 100% 100%, 0 100%, 0 50%);
}
input[type=checkbox]{
    appearance: none;
    width: 13px;
    height: 13px;
    flex: none;
    border: 1px solid #a08c86;
    background: #fff;
}
input:checked::before{
    content: "";
    display: block;
    width: 9px;
    height: 9px;
    margin: 1px;
    background: #000;
    clip-path: polygon(0 35%, 35% 65%, 100% 0, 100% 35%, 35% 100%, 0 65%);
}
#views{
    height: 50px;
    flex: none;
    margin-bottom: 6px;
    display: flex;
    align-items: flex-start;
    background: #f7f7fc;
}
#views button{
    height: 44px;
    padding: 0 13px 8px;
}
#views .selected{
    width: 72px;
    padding: 0 12px 8px 11px;
    background: #f0f0ee;
    border-right: 1px solid #2c5d87;
    color: #5a87a8;
}
#options{
    flex: 330 0 0;
}
#props{
    flex: 232 0 0;
    border: 1px solid #948f80;
}

/* 3d view */
#viewport{
    flex: 1;
    min-width: 0;
    margin: 8px 0 4px 10px;
    border: 2px solid #c2aaa4;
    border-right: 0;
    position: relative;
}
#viewport p{
    padding: 15px 20px;
    position: relative;
    font-size: 26px;
    color: #77706a;
}
#scene{
    position: absolute;
    left: 0;
    top: 0;
    width: 100%;
    height: 100%;
}
#scene text{
    font: bold 20px "DejaVu Sans", sans-serif;
    text-anchor: middle;
}
#pointer{
    position: absolute;
    right: 253px;
    bottom: 0;
}
```
